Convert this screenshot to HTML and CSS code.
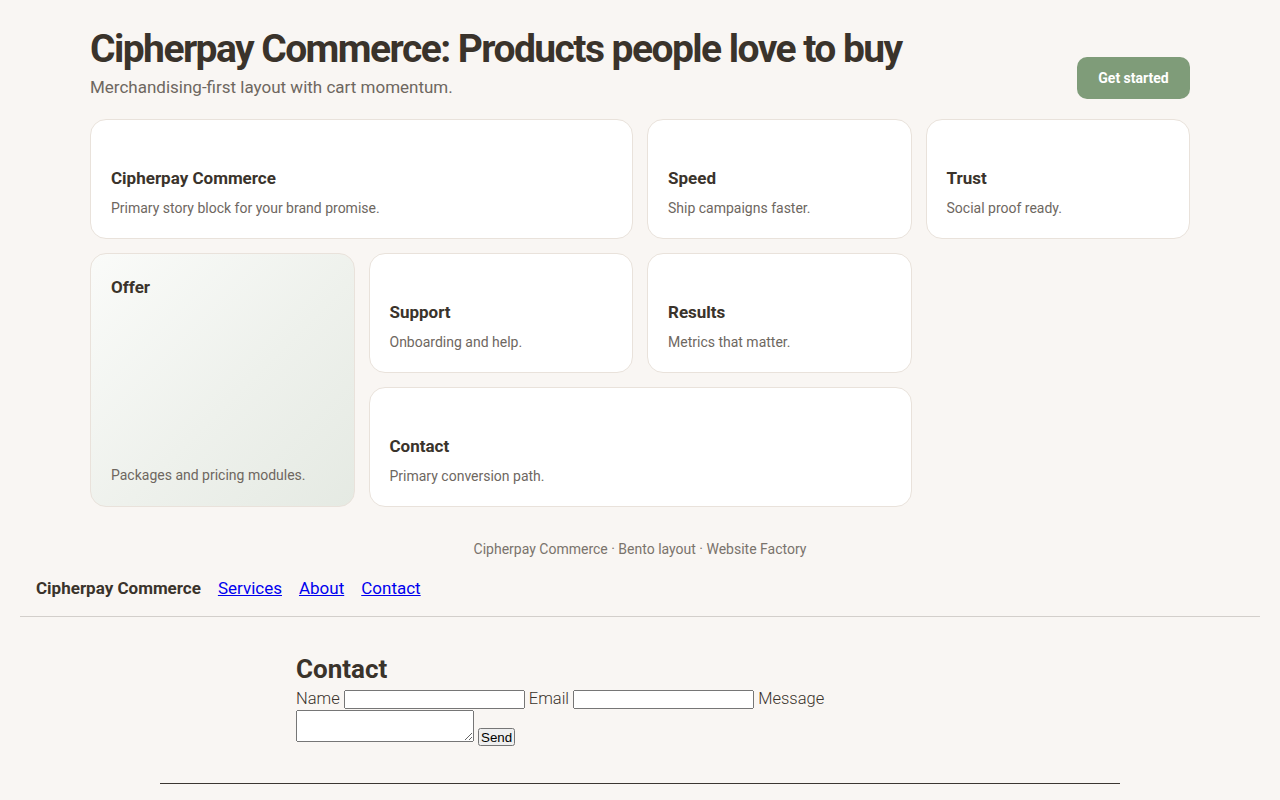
FILE: index.html
```html
<!DOCTYPE html>
<html lang="en">
<head>
    <meta charset="UTF-8">
    <meta name="viewport" content="width=device-width, initial-scale=1.0">
    <title>Cipherpay Commerce</title>
    <link rel="stylesheet" href="styles.css">
</head>
<body>

<div class="page">
    <header class="hero">
        <div class="hero-text">
            <h1>Cipherpay Commerce: Products people love to buy</h1>
            <p class="lede">Merchandising-first layout with cart momentum.</p>
        </div>
        <a class="cta" href="#contact">Get started</a>
    </header>

    <section class="bento">
        <div class="tile tile-wide">
            <h3>Cipherpay Commerce</h3>
            <p>Primary story block for your brand promise.</p>
        </div>
        <div class="tile">
            <h3>Speed</h3>
            <p>Ship campaigns faster.</p>
        </div>
        <div class="tile">
            <h3>Trust</h3>
            <p>Social proof ready.</p>
        </div>
        <div class="tile tile-tall">
            <h3>Offer</h3>
            <p>Packages and pricing modules.</p>
        </div>
        <div class="tile">
            <h3>Support</h3>
            <p>Onboarding and help.</p>
        </div>
        <div class="tile">
            <h3>Results</h3>
            <p>Metrics that matter.</p>
        </div>
        <div class="tile tile-contact">
            <h3>Contact</h3>
            <p>Primary conversion path.</p>
        </div>
    </section>

    <p class="credits">Cipherpay Commerce · Bento layout · Website Factory</p>
</div>

<nav class="topnav">
    <strong class="brand">Cipherpay Commerce</strong>
    <a href="#services">Services</a>
    <a href="#about">About</a>
    <a href="#contact">Contact</a>
</nav>

<section class="contact" id="contact">
    <h2>Contact</h2>
    <form class="contact-form">
        <label>Name <input type="text" name="name"></label>
        <label>Email <input type="email" name="email"></label>
        <label>Message <textarea name="message"></textarea></label>
        <button type="submit">Send</button>
    </form>
</section>

<div class="rule"></div>

</body>
</html>
```

FILE: styles.css
```css
body {
    font-family: Roboto, "Noto Sans", sans-serif;
    background-color: #f9f6f3;
    color: #2f2a25;
    margin: 0;
}
.page {
    max-width: 1100px;
    margin: 0 auto;
    padding-top: 27px;
}
.hero {
    display: flex;
    justify-content: space-between;
    align-items: flex-end;
    margin-bottom: 20px;
}
h1 {
    margin: 0;
    font-size: 39px;
    line-height: 44px;
    font-weight: 700;
    letter-spacing: -0.04em;
    color: #3a332b;
}
.lede {
    margin: 4px 0 0;
    font-size: 17px;
    line-height: 24px;
    color: #6e675f;
}
.cta {
    background-color: #7f9c79;
    color: white;
    text-decoration: none;
    font-size: 14px;
    font-weight: 700;
    line-height: 16px;
    width: 113px;
    padding: 13px 0;
    text-align: center;
    border-radius: 10px;
}
.bento {
    display: grid;
    grid-template-columns: repeat(4, 1fr);
    grid-auto-rows: 120px;
    gap: 14px;
}
.tile {
    background: white;
    border: 1px solid #e9e2db;
    border-radius: 16px;
    padding: 20px;
    display: flex;
    flex-direction: column;
    justify-content: flex-end;
}
.tile h3 {
    margin: 0 0 10px;
    font-size: 17px;
    line-height: 20px;
    font-weight: 700;
    color: #3a332b;
}
.tile p {
    margin: 0;
    font-size: 14px;
    line-height: 20px;
    color: #6e675f;
}
.tile-wide {
    grid-column: span 2;
}
.tile-tall {
    grid-column: 1;
    grid-row: 2 / span 2;
    padding-top: 23px;
    padding-bottom: 21px;
    justify-content: space-between;
    background: linear-gradient(135deg, #fafbf9 0%, #eef1ec 55%, #e5eae3 100%);
}
.tile-contact {
    grid-column: 2 / span 2;
    grid-row: 3;
}
.credits {
    text-align: center;
    font-size: 14px;
    color: #7a736c;
    margin: 34px 0 0;
}
.topnav {
    margin: 0 20px;
    padding: 21px 16px 18px;
    border-bottom: 1px solid #d3cfcb;
    display: flex;
    gap: 17px;
    align-items: baseline;
    font-size: 17px;
}
.brand {
    color: #3a332b;
}
.topnav a {
    color: #0000ee;
}
.contact {
    max-width: 688px;
    margin: 0 auto;
    padding-top: 35px;
}
.contact h2 {
    margin: 0 0 2px;
    font-size: 26px;
    line-height: 34px;
    font-weight: 700;
    color: #3a332b;
}
.contact-form {
    color: #3a332b;
    font-size: 16.5px;
    font-weight: 300;
    line-height: 22px;
}
.contact-form input {
    width: 181px;
    height: 19px;
    box-sizing: border-box;
}
.contact-form textarea {
    width: 178px;
    height: 32px;
    box-sizing: border-box;
}
.contact-form button {
    padding: 0 1px;
    height: 18px;
}
.rule {
    width: 960px;
    margin: 35px auto 0;
    border-top: 1px solid #3b3631;
}
```
